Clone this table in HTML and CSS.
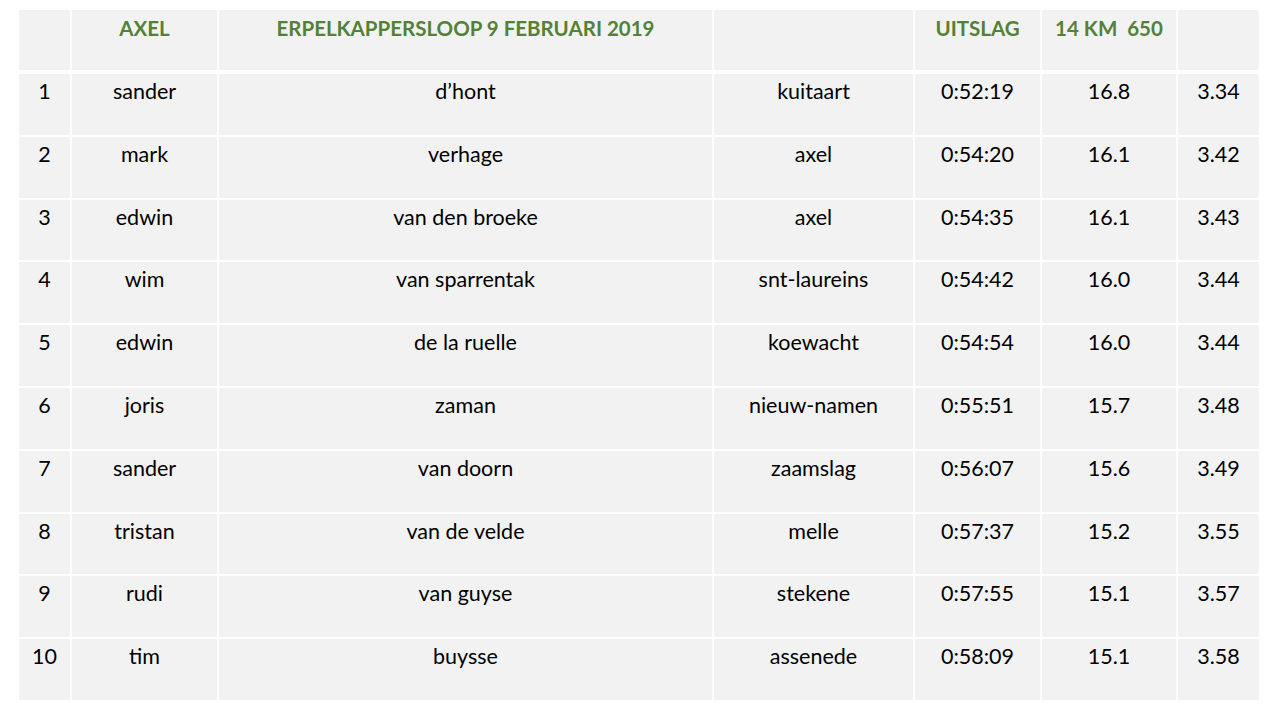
FILE: index.html
```html
<!DOCTYPE html>
<html>
<head>
<meta charset="utf-8">
<link rel="stylesheet" href="styles.css">
</head>
<body>
<div class="sheet">
  <div class="grid head">
    <div class="c"></div>
    <div class="c">AXEL</div>
    <div class="c">ERPELKAPPERSLOOP 9 FEBRUARI 2019</div>
    <div class="c"></div>
    <div class="c">UITSLAG</div>
    <div class="c">14 KM&nbsp; 650</div>
    <div class="c"></div>
  </div>
  <div class="grid body">
    <div class="c">1</div><div class="c">sander</div><div class="c">d’hont</div><div class="c">kuitaart</div><div class="c">0:52:19</div><div class="c">16.8</div><div class="c">3.34</div>
    <div class="c">2</div><div class="c">mark</div><div class="c">verhage</div><div class="c">axel</div><div class="c">0:54:20</div><div class="c">16.1</div><div class="c">3.42</div>
    <div class="c">3</div><div class="c">edwin</div><div class="c">van den broeke</div><div class="c">axel</div><div class="c">0:54:35</div><div class="c">16.1</div><div class="c">3.43</div>
    <div class="c">4</div><div class="c">wim</div><div class="c">van sparrentak</div><div class="c">snt-laureins</div><div class="c">0:54:42</div><div class="c">16.0</div><div class="c">3.44</div>
    <div class="c">5</div><div class="c">edwin</div><div class="c">de la ruelle</div><div class="c">koewacht</div><div class="c">0:54:54</div><div class="c">16.0</div><div class="c">3.44</div>
    <div class="c">6</div><div class="c">joris</div><div class="c">zaman</div><div class="c">nieuw-namen</div><div class="c">0:55:51</div><div class="c">15.7</div><div class="c">3.48</div>
    <div class="c">7</div><div class="c">sander</div><div class="c">van doorn</div><div class="c">zaamslag</div><div class="c">0:56:07</div><div class="c">15.6</div><div class="c">3.49</div>
    <div class="c">8</div><div class="c">tristan</div><div class="c">van de velde</div><div class="c">melle</div><div class="c">0:57:37</div><div class="c">15.2</div><div class="c">3.55</div>
    <div class="c">9</div><div class="c">rudi</div><div class="c">van guyse</div><div class="c">stekene</div><div class="c">0:57:55</div><div class="c">15.1</div><div class="c">3.57</div>
    <div class="c">10</div><div class="c">tim</div><div class="c">buysse</div><div class="c">assenede</div><div class="c">0:58:09</div><div class="c">15.1</div><div class="c">3.58</div>
  </div>
</div>
</body>
</html>
```
FILE: styles.css
```css
html, body {
  margin: 0;
  padding: 0;
  background: #ffffff;
}
body {
  width: 1280px;
  height: 720px;
  overflow: hidden;
  font-family: Lato, "Open Sans", sans-serif;
  font-size: 21.5px;
  color: #000000;
}
.sheet {
  padding: 10px 0 0 19px;
}
.grid {
  display: grid;
  grid-template-columns: 51px 145px 493px 199px 125px 134px 81px;
  column-gap: 2px;
  row-gap: 2px;
}
.head {
  grid-template-rows: 60px;
  margin-bottom: 4px;
}
.body {
  grid-auto-rows: 60.8px;
}
.c {
  background: #f2f2f2;
  text-align: center;
  padding-top: 5px;
  line-height: 1.2;
  white-space: nowrap;
}
.head .c {
  color: #538135;
  font-weight: 700;
  font-size: 20.5px;
  padding-top: 6px;
}
```
